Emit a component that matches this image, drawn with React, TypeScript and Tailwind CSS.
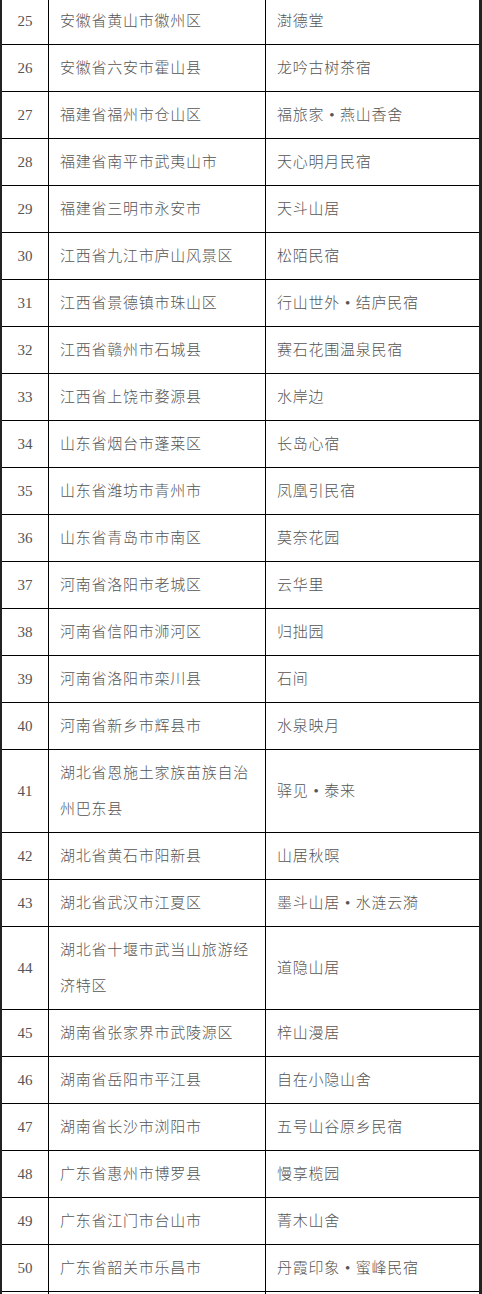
const rows: [string, string, string][] = [
  ['25', '安徽省黄山市徽州区', '澍德堂'],
  ['26', '安徽省六安市霍山县', '龙吟古树茶宿'],
  ['27', '福建省福州市仓山区', '福旅家•燕山香舍'],
  ['28', '福建省南平市武夷山市', '天心明月民宿'],
  ['29', '福建省三明市永安市', '天斗山居'],
  ['30', '江西省九江市庐山风景区', '松陌民宿'],
  ['31', '江西省景德镇市珠山区', '行山世外•结庐民宿'],
  ['32', '江西省赣州市石城县', '赛石花围温泉民宿'],
  ['33', '江西省上饶市婺源县', '水岸边'],
  ['34', '山东省烟台市蓬莱区', '长岛心宿'],
  ['35', '山东省潍坊市青州市', '凤凰引民宿'],
  ['36', '山东省青岛市市南区', '莫奈花园'],
  ['37', '河南省洛阳市老城区', '云华里'],
  ['38', '河南省信阳市浉河区', '归拙园'],
  ['39', '河南省洛阳市栾川县', '石间'],
  ['40', '河南省新乡市辉县市', '水泉映月'],
  ['41', '湖北省恩施土家族苗族自治州巴东县', '驿见•泰来'],
  ['42', '湖北省黄石市阳新县', '山居秋暝'],
  ['43', '湖北省武汉市江夏区', '墨斗山居•水涟云漪'],
  ['44', '湖北省十堰市武当山旅游经济特区', '道隐山居'],
  ['45', '湖南省张家界市武陵源区', '梓山漫居'],
  ['46', '湖南省岳阳市平江县', '自在小隐山舍'],
  ['47', '湖南省长沙市浏阳市', '五号山谷原乡民宿'],
  ['48', '广东省惠州市博罗县', '慢享榄园'],
  ['49', '广东省江门市台山市', '菁木山舍'],
  ['50', '广东省韶关市乐昌市', '丹霞印象•蜜峰民宿'],
  ['', '', ''],
];

// split on the bullet so it keeps a full-width slot like the source font
function Name({ text }: { text: string }) {
  const parts = text.split('•');
  return (
    <>
      {parts.map((p, i) => (
        <span key={i}>
          {i > 0 && <span className="inline-block w-[15.75px] text-center">•</span>}
          {p}
        </span>
      ))}
    </>
  );
}

export default function App() {
  return (
    <div
      className="w-[482px] bg-white text-[#555] text-[15px] leading-[36px] tracking-[0.75px]"
      style={{ fontFamily: '"Liberation Serif", "Noto Sans CJK SC", serif' }}
    >
      <div className="-mt-[3px] border-t border-l-2 border-r-[3px] border-black border-l-[#222] border-r-[#222]">
        {rows.map(([no, place, name], i) => (
          <div key={i} className="flex min-h-[47px] border-b border-black">
            <div className="flex w-[47px] shrink-0 items-center justify-center border-r border-black tracking-normal">
              {no}
            </div>
            <div className="flex w-[217px] shrink-0 items-center border-r border-black py-[5px] pl-[11px] pr-[11px] font-light">
              {place}
            </div>
            <div className="flex flex-1 items-center py-[5px] pl-[11px] pr-[11px] font-light">
              <span>
                <Name text={name} />
              </span>
            </div>
          </div>
        ))}
      </div>
    </div>
  );
}
